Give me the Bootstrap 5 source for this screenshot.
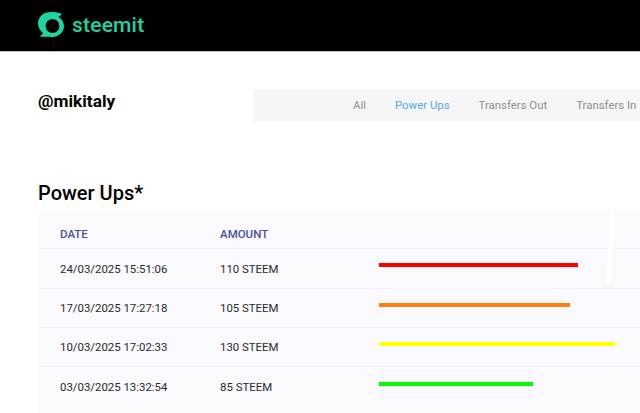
<!DOCTYPE html>
<html lang="en">
<head>
<meta charset="utf-8">
<title>Power Ups</title>
<link rel="stylesheet" href="https://cdn.jsdelivr.net/npm/bootstrap@5.3.0/dist/css/bootstrap.min.css">
<style>
html,body{height:413px;overflow:hidden;}
body{font-family:Roboto,"Liberation Sans",sans-serif;background:#fff;color:#212529;}
.top-strip{height:52px;background:#000;border-bottom:1px solid #bbb;padding-left:38px;}
.logo-mark{margin-bottom:2px;flex:none;}
.brand-word{font-family:Roboto,sans-serif;font-size:21px;font-weight:500;color:#1bd6a3;letter-spacing:.2px;line-height:1;margin-left:8px;}
.page-area{padding-left:38px;width:640px;overflow:hidden;}
.head-line{height:32px;margin-top:37px;}
.handle-name{font-size:17.3px;font-weight:700;color:#000;width:215px;flex:none;line-height:24px;margin:0;}
.tab-strip{width:500px;flex:none;height:32px;background:#f6f6f6;padding-left:100px;padding-top:2px;font-size:11.4px;}
.tab-item{color:#8e8e8e;text-decoration:none;white-space:nowrap;}
.tab-on{color:#5ba6e6;}
.sect-title{font-size:20px;font-weight:500;color:#000;line-height:26px;margin:59px 0 4px;}
.ledger-box{width:640px;height:203px;background:#f9f9fe;position:relative;}
.ledger-row{height:39.3px;border-bottom:1px solid #f3f4fa;padding-left:22px;padding-top:2px;font-size:11.4px;color:#2b2b2b;}
.ledger-top{padding-top:10px;}
.cell-date{width:160px;flex:none;}
.cell-amt{width:159px;flex:none;}
.head-cell{color:#48509c;font-weight:500;font-size:11.5px;}
.bar-line{height:4px;display:block;margin-top:-8px;}
.slant-mark{position:absolute;left:568px;top:0;width:9px;height:74px;}
</style>
</head>
<body>
<nav class="top-strip d-flex align-items-center">
  <svg class="logo-mark" width="26" height="25" viewBox="0 0 26 25" aria-hidden="true">
    <path fill="#1bd6a3" d="M8 .8C12-.3 19-.3 24 2L20.500 5C24 7 26 10.500 26 14C26 20 21 25 14 25C10 25 6 24.500 2 25L5 21C2 18.500 0 15 0 11.500C0 6.500 3.500 2 8 .8Z"/>
    <circle cx="14.500" cy="14" r="6.900" fill="#000"/>
  </svg>
  <span class="brand-word">steemit</span>
</nav>
<main class="page-area">
  <div class="head-line d-flex align-items-start">
    <h1 class="handle-name">@mikitaly</h1>
    <div class="tab-strip d-flex align-items-center">
      <a class="tab-item" href="#" style="margin-right:29px">All</a>
      <a class="tab-item tab-on" href="#" style="margin-right:29px">Power Ups</a>
      <a class="tab-item" href="#" style="margin-right:29px">Transfers Out</a>
      <a class="tab-item" href="#">Transfers In</a>
    </div>
  </div>
  <h2 class="sect-title">Power Ups*</h2>
  <div class="ledger-box">
    <div class="ledger-row ledger-top d-flex align-items-center">
      <div class="cell-date head-cell">DATE</div><div class="cell-amt head-cell">AMOUNT</div>
    </div>
    <div class="ledger-row d-flex align-items-center">
      <div class="cell-date">24/03/2025 15:51:06</div><div class="cell-amt">110 STEEM</div>
      <span class="bar-line" style="width:199px;background:#ff0000"></span>
    </div>
    <div class="ledger-row d-flex align-items-center">
      <div class="cell-date">17/03/2025 17:27:18</div><div class="cell-amt">105 STEEM</div>
      <span class="bar-line" style="width:191px;background:#ff7f0e"></span>
    </div>
    <div class="ledger-row d-flex align-items-center">
      <div class="cell-date">10/03/2025 17:02:33</div><div class="cell-amt">130 STEEM</div>
      <span class="bar-line" style="width:236px;background:#ffff00"></span>
    </div>
    <div class="ledger-row d-flex align-items-center" style="border-bottom:0">
      <div class="cell-date">03/03/2025 13:32:54</div><div class="cell-amt">85 STEEM</div>
      <span class="bar-line" style="width:154px;background:#00ff00"></span>
    </div>
    <svg class="slant-mark" viewBox="0 0 9 74" aria-hidden="true"><path d="M7 0L2 72" stroke="#fff" stroke-width="4" stroke-linecap="round" fill="none"/></svg>
  </div>
</main>
</body>
</html>
